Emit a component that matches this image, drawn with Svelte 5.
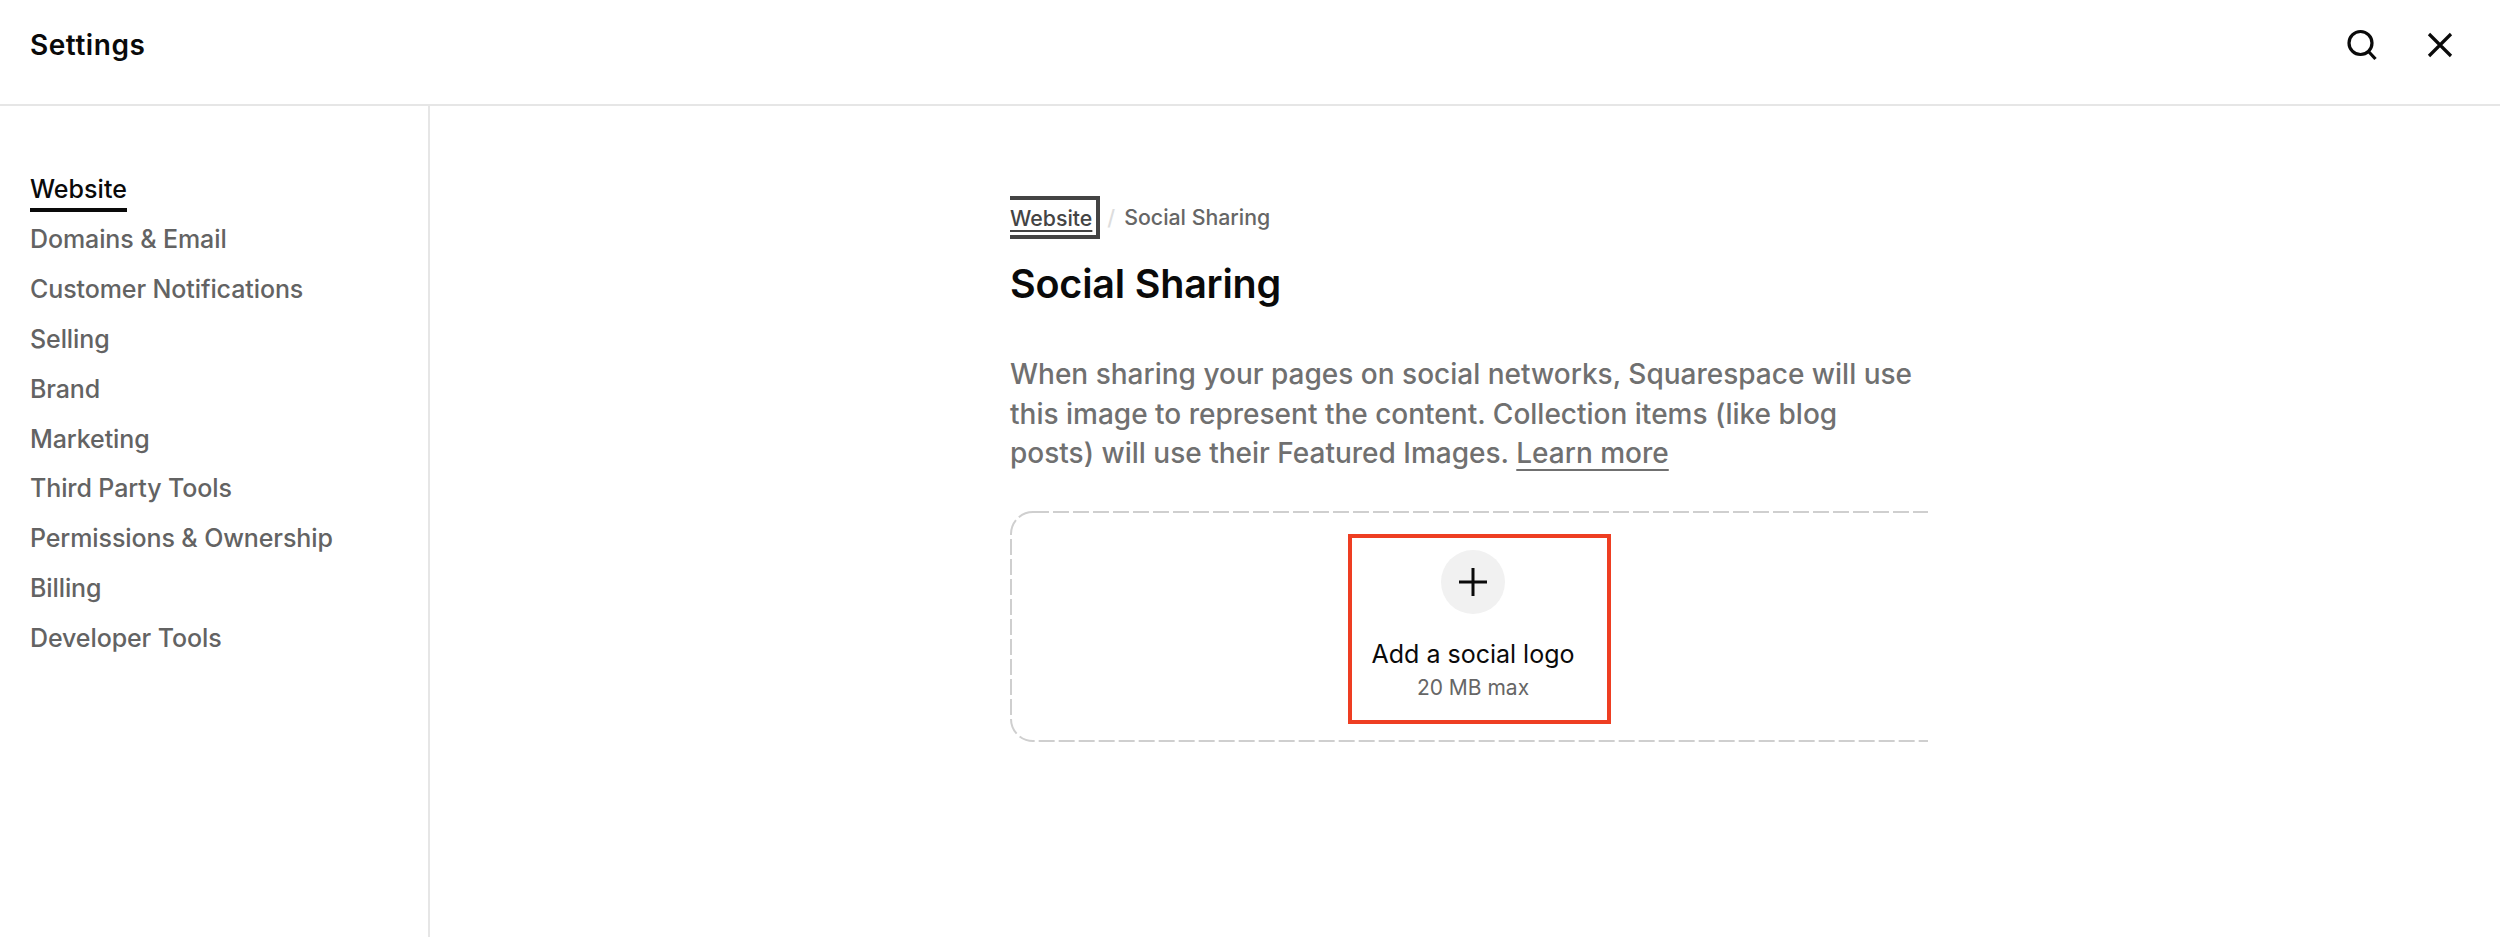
<script>
  const navItems = [
    'Website',
    'Domains & Email',
    'Customer Notifications',
    'Selling',
    'Brand',
    'Marketing',
    'Third Party Tools',
    'Permissions & Ownership',
    'Billing',
    'Developer Tools'
  ];
</script>

<div class="page">
  <header class="topbar">
    <div class="title">Settings</div>
    <div class="actions">
      <button class="icon" aria-label="Search">
        <svg width="32" height="32" viewBox="0 0 32 32" fill="none" stroke="#0a0a0a" stroke-width="3.2">
          <circle cx="14.5" cy="14" r="11.5" />
          <path d="M22.5 22.5l7 7.5" />
        </svg>
      </button>
      <button class="icon" aria-label="Close">
        <svg width="32" height="32" viewBox="0 0 32 32" fill="none" stroke="#0a0a0a" stroke-width="3.2">
          <path d="M5 5l22 22M27 5l-22 22" />
        </svg>
      </button>
    </div>
  </header>

  <div class="body">
    <nav class="sidebar">
      {#each navItems as item, i}
        <a class="nav-item" class:active={i === 0} href="#{item}">{item}</a>
      {/each}
    </nav>

    <main class="content">
      <div class="column">
        <div class="crumbs">
          <a class="crumb-link" href="#website">Website</a>
          <span class="slash">/</span>
          <span class="crumb-current">Social Sharing</span>
        </div>
        <h1>Social Sharing</h1>
        <p class="desc">
          When sharing your pages on social networks, Squarespace will use this image to represent the content. Collection items (like blog posts) will use their Featured Images. <a href="#learn">Learn more</a>
        </p>

        <div class="dropzone">
          <svg class="dashes" width="940" height="231" fill="none">
            <rect x="1" y="1" width="938" height="229" rx="22" stroke="#cfcfcf" stroke-width="2" stroke-dasharray="16 4" />
          </svg>
          <div class="upload">
            <div class="plus">
              <svg width="30" height="30" viewBox="0 0 30 30" fill="none" stroke="#0a0a0a" stroke-width="3">
                <path d="M15 1v28M1 15h28" />
              </svg>
            </div>
            <div class="upload-label">Add a social logo</div>
            <div class="upload-hint">20 MB max</div>
          </div>
          <div class="highlight"></div>
        </div>
      </div>
    </main>
  </div>
</div>

<style>
  :global(body) {
    background: #fff;
  }
  .page {
    width: 2500px;
    height: 937px;
    overflow: hidden;
    display: flex;
    flex-direction: column;
    font-family: Inter, "Liberation Sans", sans-serif;
    color: #0a0a0a;
  }
  .topbar {
    height: 106px;
    flex: none;
    box-sizing: border-box;
    padding: 0 44px 14px 30px;
    display: flex;
    align-items: center;
    justify-content: space-between;
    border-bottom: 2px solid #e6e6e6;
  }
  .title {
    font-size: 28px;
    font-weight: 600;
    letter-spacing: 0.55px;
  }
  .actions {
    display: flex;
    gap: 46px;
  }
  .icon {
    padding: 0;
    border: none;
    background: none;
    width: 32px;
    height: 32px;
  }
  .body {
    flex: 1;
    display: flex;
  }
  .sidebar {
    flex: none;
    width: 398px;
    border-right: 2px solid #e6e6e6;
    padding: 58px 0 0 30px;
    display: flex;
    flex-direction: column;
    align-items: flex-start;
  }
  .nav-item {
    height: 49.9px;
    box-sizing: border-box;
    line-height: 50px;
    font-size: 25px;
    font-weight: 500;
    letter-spacing: -0.1px;
    color: #636363;
    text-decoration: none;
  }
  .nav-item.active {
    color: #0a0a0a;
    height: 48px;
    margin-bottom: 2px;
    letter-spacing: 0.05px;
    border-bottom: 4px solid #0a0a0a;
  }
  .content {
    flex: 1;
    padding-left: 580px;
  }
  .column {
    width: 918px;
    padding-top: 89px;
  }
  .crumbs {
    display: flex;
    align-items: center;
    height: 44px;
    font-size: 21.3px;
    font-weight: 500;
    color: #666;
  }
  .crumb-link {
    color: #444;
    text-decoration: underline;
    text-underline-offset: 4px;
    height: 43px;
    box-sizing: border-box;
    border: 4px solid #444;
    border-left: none;
    line-height: 36px;
    padding-right: 4px;
  }
  .slash {
    color: #ddd;
    margin: 0 9px 0 7px;
  }
  h1 {
    margin: 20px 0 0;
    font-size: 39.5px;
    font-weight: 600;
    line-height: 50px;
    letter-spacing: -0.2px;
  }
  .desc {
    margin: 46px 0 0;
    width: 912px;
    font-size: 28px;
    line-height: 39.6px;
    color: #707070;
    font-weight: 450;
  }
  .desc a {
    color: #707070;
    text-decoration: underline;
    text-underline-offset: 6px;
    text-decoration-thickness: 2px;
  }
  .dropzone {
    position: relative;
    overflow: hidden;
    margin-top: 37px;
    height: 231px;
  }
  .dashes {
    position: absolute;
    left: 0;
    top: 0;
  }
  .upload {
    position: relative;
    box-sizing: border-box;
    width: 926px;
    display: flex;
    flex-direction: column;
    align-items: center;
    padding-top: 39px;
  }
  .highlight {
    position: absolute;
    left: 338px;
    top: 23px;
    width: 263px;
    height: 190px;
    box-sizing: border-box;
    border: 4px solid #ee3e22;
  }
  .plus {
    width: 64px;
    height: 64px;
    border-radius: 50%;
    background: #f1f1f1;
    display: flex;
    align-items: center;
    justify-content: center;
  }
  .upload-label {
    margin-top: 24px;
    font-size: 25px;
    line-height: 32px;
  }
  .upload-hint {
    margin-top: 3px;
    font-size: 21px;
    line-height: 30px;
    color: #666;
  }
</style>
